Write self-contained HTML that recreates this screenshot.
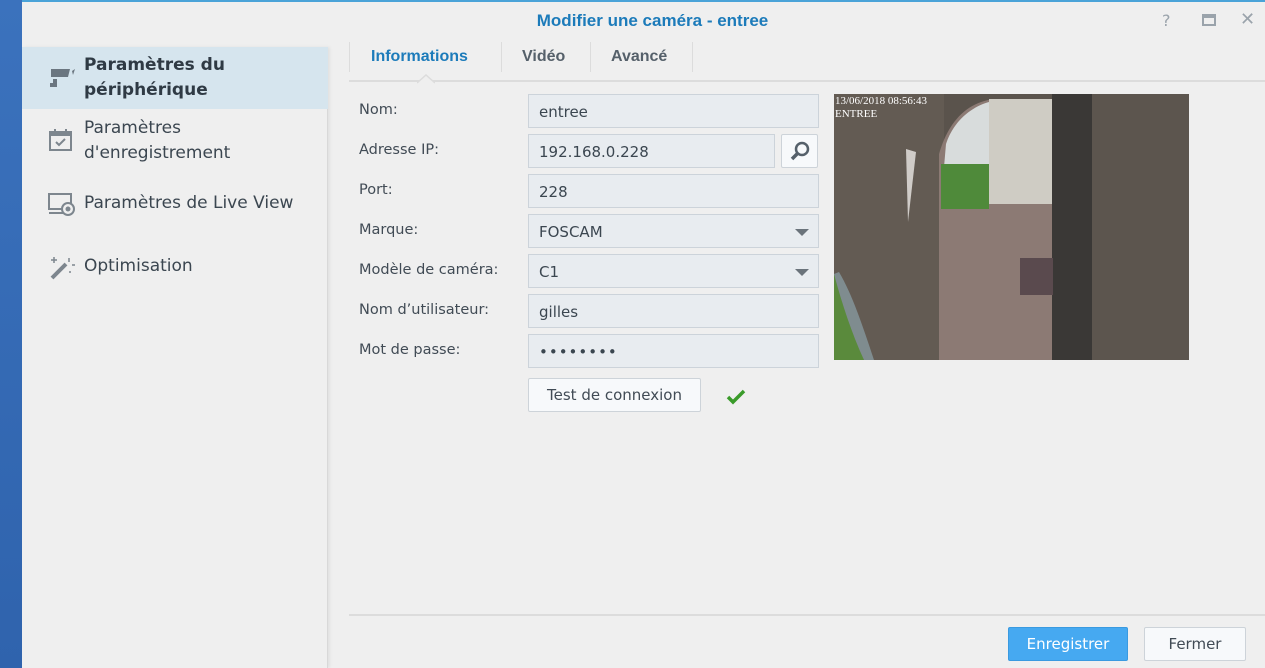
<!DOCTYPE html>
<html><head><meta charset="utf-8"><style>
*{margin:0;padding:0;box-sizing:border-box}
body{width:1265px;height:668px;overflow:hidden;background:#efefef;font-family:"DejaVu Sans","Liberation Sans",sans-serif;color:#414b55;position:relative}
.abs{position:absolute}
.strip{left:0;top:0;width:22px;height:668px;background:linear-gradient(#3b72bd,#2f63ad)}
.topline{left:22px;top:0;width:1243px;height:2px;background:#4aa3d8}
.title{left:0;width:1265px;top:11px;text-align:center;font-family:"Liberation Sans",sans-serif;font-size:17px;font-weight:bold;color:#1c7bba;padding-left:40px}
.side{left:22px;top:47px;width:306px;height:621px;background:#efefef;border-right:1px solid #d8d8d8;box-shadow:2px 0 3px rgba(0,0,0,.06)}
.item{position:absolute;left:84px;font-size:17px;line-height:25px;color:#3b4650}
.sel{left:22px;top:47px;width:306px;height:62px;background:#d6e5ee}
.tabs{left:349px;top:42px;width:916px;height:40px;border-bottom:2px solid #dcdcdc}
.tab{position:absolute;top:6px;font-family:"Liberation Sans",sans-serif;font-weight:bold;font-size:16px;color:#55606a}
.sep{position:absolute;top:0;width:1px;height:30px;background:#dcdcdc}
.lab{position:absolute;left:359px;font-size:14.5px;color:#414b55}
.inp{position:absolute;left:528px;width:291px;height:34px;background:#e8ecf0;border:1px solid #ccd3da;font-size:15px;padding:8px 10px;color:#3b4650}
.arrow{position:absolute;right:9px;top:14px;width:0;height:0;border-left:7px solid transparent;border-right:7px solid transparent;border-top:7px solid #6a737b}
.btn{position:absolute;background:#f7f9fb;border:1px solid #cdd3d9;font-size:15px;color:#414b55;text-align:center;border-radius:2px}
</style></head><body>
<div class="abs strip"></div>
<div class="abs topline"></div>
<div class="abs title">Modifier une caméra - entree</div>
<div class="abs" style="left:1162px;top:11px;font-size:16px;color:#9aa3ab">?</div>
<div class="abs" style="left:1202px;top:14px;width:14px;height:12px;border:2px solid #9aa3ab;border-top-width:4px"></div>
<div class="abs" style="left:1240px;top:9px;font-size:18px;color:#9aa3ab">✕</div>

<div class="abs side"></div>
<div class="abs sel"></div>
<svg class="abs" style="left:48px;top:66px" width="30" height="24"><path d="M3 3h19l-2 8H3z" fill="#6b7680"/><path d="M24 5l3-2-2 6z" fill="#6b7680"/><rect x="5" y="13" width="4" height="6" fill="#6b7680"/><rect x="2" y="17" width="7" height="4" fill="#6b7680"/></svg>
<div class="item" style="top:53px;font-weight:bold;color:#2f3a44">Paramètres du<br>périphérique</div>
<svg class="abs" style="left:48px;top:127px" width="26" height="26"><rect x="2" y="5" width="21" height="18" fill="none" stroke="#7d868e" stroke-width="2"/><rect x="2" y="5" width="21" height="4" fill="#7d868e"/><path d="M7 2v5M18 2v5" stroke="#7d868e" stroke-width="2"/><path d="M8 15l3 3 6-6" fill="none" stroke="#7d868e" stroke-width="2"/></svg>
<div class="item" style="top:116px">Paramètres<br>d'enregistrement</div>
<svg class="abs" style="left:47px;top:192px" width="30" height="26"><rect x="2" y="2" width="22" height="15" fill="none" stroke="#7d868e" stroke-width="2"/><path d="M2 21h14" stroke="#7d868e" stroke-width="2"/><circle cx="21" cy="17" r="6" fill="#efefef" stroke="#7d868e" stroke-width="2"/><circle cx="21" cy="17" r="2.5" fill="#7d868e"/></svg>
<div class="item" style="top:191px">Paramètres de Live View</div>
<svg class="abs" style="left:48px;top:255px" width="28" height="26"><path d="M4 23l14-14" stroke="#7d868e" stroke-width="4"/><path d="M3 5h6M6 2v6M21 3v4M24 10h3M22 16v2" stroke="#7d868e" stroke-width="1.5"/></svg>
<div class="item" style="top:254px">Optimisation</div>

<div class="abs tabs">
<div class="sep" style="left:0"></div>
<div class="tab" style="left:22px;color:#1c7bba">Informations</div>
<div class="sep" style="left:152px"></div>
<div class="tab" style="left:173px">Vidéo</div>
<div class="sep" style="left:241px"></div>
<div class="tab" style="left:262px">Avancé</div>
<div class="sep" style="left:343px"></div>
</div>
<svg class="abs" style="left:417px;top:74px" width="18" height="10"><path d="M0 9L9 1 18 9" fill="#efefef" stroke="#dcdcdc" stroke-width="1.5"/></svg>

<div class="lab" style="top:102px">Nom:</div>
<div class="lab" style="top:142px">Adresse IP:</div>
<div class="lab" style="top:182px">Port:</div>
<div class="lab" style="top:222px">Marque:</div>
<div class="lab" style="top:262px">Modèle de caméra:</div>
<div class="lab" style="top:302px">Nom d’utilisateur:</div>
<div class="lab" style="top:342px">Mot de passe:</div>

<div class="inp" style="top:94px">entree</div>
<div class="inp" style="top:134px;width:247px">192.168.0.228</div>
<div class="btn" style="left:781px;top:134px;width:37px;height:34px"><svg width="24" height="24" style="margin-top:4px"><circle cx="14" cy="10" r="6" fill="none" stroke="#55606a" stroke-width="2.5"/><path d="M10 14l-6 6" stroke="#55606a" stroke-width="3.5"/></svg></div>
<div class="inp" style="top:174px">228</div>
<div class="inp" style="top:214px">FOSCAM<div class="arrow"></div></div>
<div class="inp" style="top:254px">C1<div class="arrow"></div></div>
<div class="inp" style="top:294px">gilles</div>
<div class="inp" style="top:334px;letter-spacing:1px">••••••••</div>
<div class="btn" style="left:528px;top:378px;width:173px;height:34px;line-height:32px">Test de connexion</div>
<svg class="abs" style="left:726px;top:389px" width="20" height="16"><path d="M2 8l5 5 11-11" fill="none" stroke="#3a9b2a" stroke-width="3.5"/></svg>

<svg class="abs" style="left:834px;top:94px" width="355" height="266">
<rect width="355" height="266" fill="#5a534c"/>
<path d="M0 0h110v266H0z" fill="#635b53"/>
<path d="M105 266V60C115 25 135 8 160 5h60v261z" fill="#8c7a74"/>
<path d="M112 50C120 25 140 12 155 8v100h-48z" fill="#d8dcdc"/>
<path d="M107 70h48v45h-48z" fill="#4f8a3a"/>
<path d="M155 5h65v105h-65z" fill="#cfccc4"/>
<path d="M218 0h40v266h-40z" fill="#3a3836"/>
<path d="M258 0h97v266h-97z" fill="#5c554e"/>
<path d="M0 180c10 20 20 60 30 86H0z" fill="#5a8a3c"/>
<path d="M0 180c8 30 18 60 30 86h10C28 230 18 200 5 178z" fill="#7f8c8f"/>
<rect x="186" y="164" width="33" height="37" fill="#5a4a4e"/>
<path d="M72 55l10 3-8 70z" fill="#d0ccc8"/>
<text x="1" y="10" fill="#fff" font-family="Liberation Serif,serif" font-size="11">13/06/2018 08:56:43</text>
<text x="1" y="23" fill="#fff" font-family="Liberation Serif,serif" font-size="11">ENTREE</text>
</svg>

<div class="abs" style="left:349px;top:614px;width:916px;height:2px;background:#dcdcdc"></div>
<div class="btn" style="left:1008px;top:627px;width:120px;height:34px;line-height:32px;background:#46a9f1;border-color:#3a9ae0;color:#fff">Enregistrer</div>
<div class="btn" style="left:1144px;top:627px;width:102px;height:34px;line-height:32px">Fermer</div>
</body></html>
